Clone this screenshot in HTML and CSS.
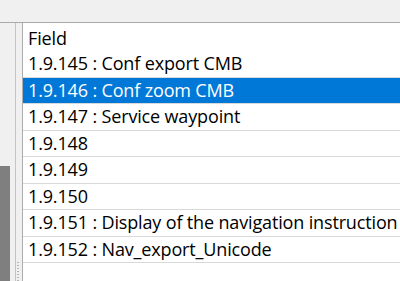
FILE: index.html
```html
<!DOCTYPE html>
<html lang="en">
<head>
    <meta charset="UTF-8">
    <title>Fields</title>
    <link rel="stylesheet" href="styles.css">
</head>
<body>
    <div class="topbar"></div>
    <div class="main">
        <div class="side">
            <div class="side-dark"></div>
        </div>
        <div class="splitter">
            <div class="grip"></div>
        </div>
        <div class="list">
            <div class="list-header">Field</div>
            <div class="row">1.9.145 : Conf export CMB</div>
            <div class="row selected">1.9.146 : Conf zoom CMB</div>
            <div class="row">1.9.147 : Service waypoint</div>
            <div class="row">1.9.148</div>
            <div class="row">1.9.149</div>
            <div class="row">1.9.150</div>
            <div class="row">1.9.151 : Display of the navigation instruction</div>
            <div class="row">1.9.152 : Nav_export_Unicode</div>
        </div>
    </div>
</body>
</html>
```

FILE: styles.css
```css
* {
    margin: 0;
    padding: 0;
    box-sizing: border-box;
}

body {
    width: 400px;
    height: 281px;
    overflow: hidden;
    background-color: #f0f0f0;
    font-family: "Open Sans", "Noto Sans", sans-serif;
    font-size: 18px;
    letter-spacing: -0.15px;
    color: #000;
}

.topbar {
    height: 23px;
    background-color: #f0f0f0;
    border-bottom: 1px solid #a9a9a9;
}

.main {
    display: flex;
    height: 258px;
}

.side {
    width: 16px;
    background-color: #f0f0f0;
    border-right: 1px solid #c4c4c4;
    display: flex;
    flex-direction: column;
    justify-content: flex-end;
}

.side-dark {
    width: 10px;
    height: 115px;
    background-color: #7f7f7f;
}

.splitter {
    width: 6px;
    display: flex;
    flex-direction: column;
    justify-content: flex-end;
    padding-left: 1px;
}

.grip {
    width: 2px;
    height: 19px;
    background-image: repeating-linear-gradient(to bottom, #b5b5b5 0 1px, transparent 1px 3px);
}

.list {
    flex: 1;
    background-color: #fff;
    border-left: 1px solid #adadad;
    white-space: nowrap;
    overflow: hidden;
}

.list-header {
    height: 28px;
    padding: 3px 0 0 5px;
    line-height: 25px;
}

.row {
    height: 26.5px;
    padding-left: 5px;
    line-height: 25px;
    border-bottom: 1px solid #d9d9d9;
}

.row.selected {
    background-color: #0078d7;
    color: #fff;
}
```
